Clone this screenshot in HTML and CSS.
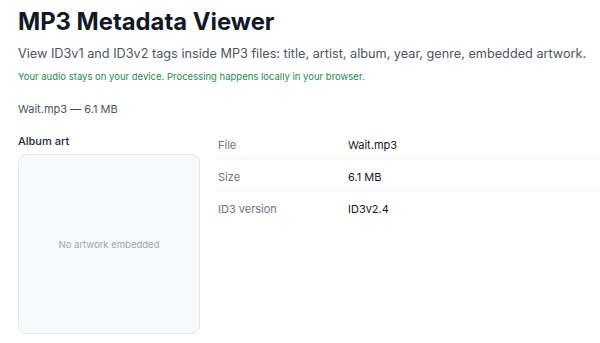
FILE: index.html
```html
<!DOCTYPE html>
<html>
<head>
  <meta charset="utf-8">
  <title>MP3 Metadata Viewer</title>
  <link rel="stylesheet" href="styles.css">
</head>
<body>
  <div class="page">
    <h1>MP3 Metadata Viewer</h1>
    <p class="lead">View ID3v1 and ID3v2 tags inside MP3 files: title, artist, album, year, genre, embedded artwork.</p>
    <p class="privacy">Your audio stays on your device. Processing happens locally in your browser.</p>

    <div class="file-info">Wait.mp3 — 6.1 MB</div>

    <div class="result">
      <div class="art">
        <h3>Album art</h3>
        <div class="art-box">No artwork embedded</div>
      </div>

      <div class="tags">
        <div class="tag-row">
          <span class="tag-name">File</span>
          <span class="tag-value">Wait.mp3</span>
        </div>
        <div class="tag-row">
          <span class="tag-name">Size</span>
          <span class="tag-value">6.1 MB</span>
        </div>
        <div class="tag-row">
          <span class="tag-name">ID3 version</span>
          <span class="tag-value">ID3v2.4</span>
        </div>
      </div>
    </div>
  </div>
</body>
</html>
```

FILE: styles.css
```css
body {
  font-family: Inter, 'Noto Sans', sans-serif;
  margin: 0;
  background-color: #fff;
  color: #111827;
}

.page {
  padding: 7px 0 0 18px;
}

h1 {
  font-size: 23.8px;
  font-weight: 700;
  line-height: 30px;
  margin: 0 0 7px;
  color: #111827;
}

.lead {
  font-size: 12.7px;
  line-height: 20px;
  color: #4b5563;
  white-space: nowrap;
  margin: 0 0 5px;
}

.privacy {
  font-size: 9.5px;
  line-height: 15px;
  color: #1f8a4c;
  margin: 0;
}

.file-info {
  font-size: 11px;
  color: #4b5563;
  margin-top: 17px;
  line-height: 16px;
}

.result {
  display: flex;
  align-items: flex-start;
  gap: 18px;
  margin-top: 16px;
}

.art {
  width: 182px;
  flex: none;
}

.art h3 {
  font-size: 11px;
  font-weight: 500;
  line-height: 16px;
  margin: 0 0 5px;
  color: #1f2937;
}

.art-box {
  height: 178px;
  background-color: #f8f9fb;
  border: 1px solid #e5e7eb;
  border-radius: 8px;
  display: flex;
  align-items: center;
  justify-content: center;
  font-size: 9.5px;
  color: #9ca3af;
}

.tags {
  flex: 1;
  font-size: 11px;
  margin-top: -6px;
}

.tag-row {
  display: grid;
  grid-template-columns: 130px 1fr;
  padding: 10px 0 5px;
  line-height: 16px;
  border-bottom: 1px solid #f0f1f3;
}

.tag-row:last-child {
  border-bottom: none;
}

.tag-name {
  color: #6b7280;
}

.tag-value {
  color: #111827;
}
```
